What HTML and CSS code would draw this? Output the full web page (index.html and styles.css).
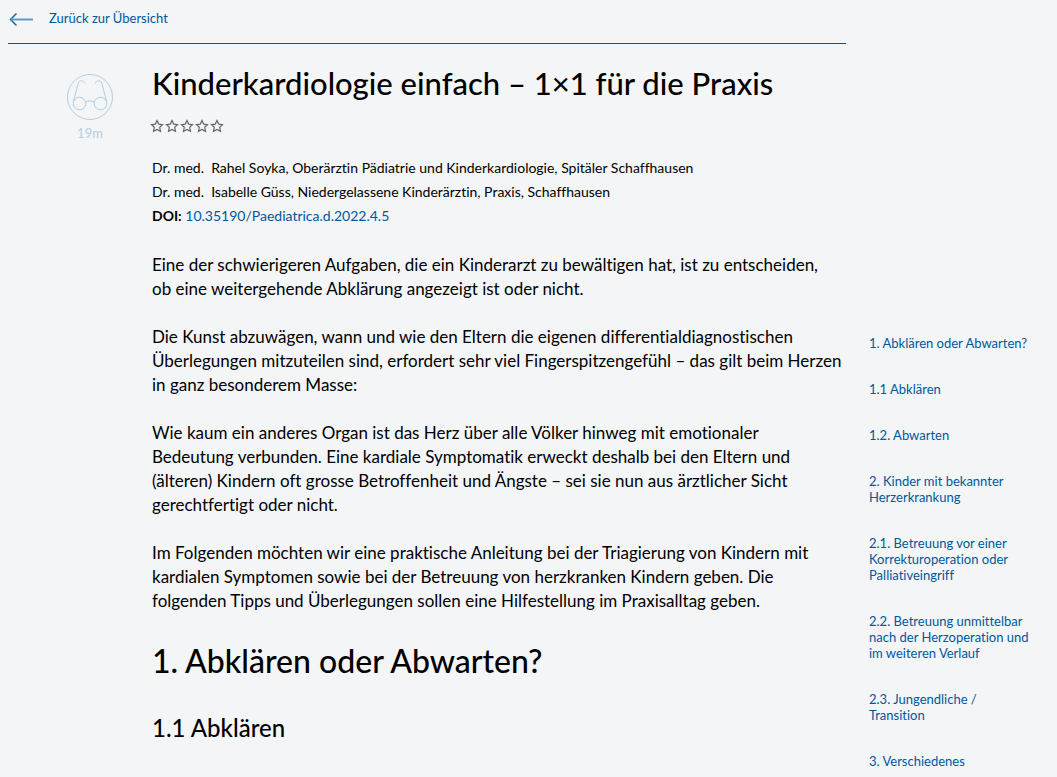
FILE: index.html
```html
<!DOCTYPE html>
<html lang="de">
<head>
    <meta charset="UTF-8">
    <meta name="viewport" content="width=device-width, initial-scale=1.0">
    <title>Kinderkardiologie einfach – 1×1 für die Praxis</title>
    <link rel="stylesheet" href="styles.css">
</head>
<body>

    <div class="page">
        <main class="main">
            <nav class="back-bar">
                <a class="back-link" href="#">
                    <svg class="back-arrow" viewBox="0 0 24 16" aria-hidden="true">
                        <path d="M7.500 3.500 1.500 9.500l6 6" />
                        <path class="shaft" d="M2 9.500h22" />
                    </svg>
                    <span>Zurück zur Übersicht</span>
                </a>
            </nav>

            <div class="article-wrap">
                <div class="reading-time">
                    <svg class="glasses" viewBox="0 0 48 48" aria-hidden="true">
                        <circle cx="24" cy="24" r="22.500" />
                        <circle cx="13.500" cy="30.500" r="6.300" />
                        <circle cx="34.500" cy="30.500" r="6.300" />
                        <path d="M19.800 29c2.500-1.500 5.900-1.500 8.400 0M7.500 28l4.800-18c.8-3 5.700-3 6.500.5M40.500 28l-4.800-18c-.8-3-5.700-3-6.500.5" />
                    </svg>
                    <span>19m</span>
                </div>

                <article class="article">
                    <h1>Kinderkardiologie einfach – 1×1 für die Praxis</h1>

                    <div class="rating" role="img" aria-label="0 von 5 Sternen">
                        <svg viewBox="0 0 14 14"><path d="M5 1.500l1.700 3.600 3.800.5-2.800 2.700.8 4L5 10.400l-3.500 1.900.8-4L-.5 5.600l3.800-.5z" /></svg>
                        <svg viewBox="0 0 14 14"><path d="M5 1.500l1.700 3.600 3.800.5-2.800 2.700.8 4L5 10.400l-3.500 1.900.8-4L-.5 5.600l3.800-.5z" /></svg>
                        <svg viewBox="0 0 14 14"><path d="M5 1.500l1.700 3.600 3.800.5-2.800 2.700.8 4L5 10.400l-3.500 1.900.8-4L-.5 5.600l3.800-.5z" /></svg>
                        <svg viewBox="0 0 14 14"><path d="M5 1.500l1.700 3.600 3.800.5-2.800 2.700.8 4L5 10.400l-3.500 1.900.8-4L-.5 5.600l3.800-.5z" /></svg>
                        <svg viewBox="0 0 14 14"><path d="M5 1.500l1.700 3.600 3.800.5-2.800 2.700.8 4L5 10.400l-3.500 1.900.8-4L-.5 5.600l3.800-.5z" /></svg>
                    </div>

                    <div class="meta">
                        <div>Dr. med.&nbsp; Rahel Soyka, Oberärztin Pädiatrie und Kinderkardiologie, Spitäler Schaffhausen</div>
                        <div>Dr. med.&nbsp; Isabelle Güss, Niedergelassene Kinderärztin, Praxis, Schaffhausen</div>
                        <div><strong>DOI:</strong> <a href="#">10.35190/Paediatrica.d.2022.4.5</a></div>
                    </div>

                    <p>Eine der schwierigeren Aufgaben, die ein Kinderarzt zu bewältigen hat, ist zu entscheiden,<br> ob eine weitergehende Abklärung angezeigt ist oder nicht.</p>
                    <p>Die Kunst abzuwägen, wann und wie den Eltern die eigenen differentialdiagnostischen Überlegungen mitzuteilen sind, erfordert sehr viel Fingerspitzengefühl – das gilt beim Herzen in ganz besonderem Masse:</p>
                    <p>Wie kaum ein anderes Organ ist das Herz über alle Völker hinweg mit emotionaler<br> Bedeutung verbunden. Eine kardiale Symptomatik erweckt deshalb bei den Eltern und<br> (älteren) Kindern oft grosse Betroffenheit und Ängste – sei sie nun aus ärztlicher Sicht<br> gerechtfertigt oder nicht.</p>
                    <p>Im Folgenden möchten wir eine praktische Anleitung bei der Triagierung von Kindern mit kardialen Symptomen sowie bei der Betreuung von herzkranken Kindern geben. Die folgenden Tipps und Überlegungen sollen eine Hilfestellung im Praxisalltag geben.</p>

                    <h2 id="k1">1. Abklären oder Abwarten?</h2>
                    <h3 id="k11">1.1 Abklären</h3>
                </article>
            </div>
        </main>

        <aside class="toc">
            <a href="#k1">1. Abklären oder Abwarten?</a>
            <a href="#k11">1.1 Abklären</a>
            <a href="#">1.2. Abwarten</a>
            <a href="#">2. Kinder mit bekannter Herzerkrankung</a>
            <a href="#">2.1. Betreuung vor einer Korrekturoperation oder Palliativeingriff</a>
            <a href="#">2.2. Betreuung unmittelbar nach der Herzoperation und im weiteren Verlauf</a>
            <a href="#">2.3. Jungendliche / Transition</a>
            <a href="#">3. Verschiedenes</a>
        </aside>
    </div>

</body>
</html>
```

FILE: styles.css
```css
body {
    margin: 0;
    padding: 0 8px;
    background: #f3f5f7;
    color: #000;
    font-family: Lato, "Open Sans", sans-serif;
    font-size: 17px;
    line-height: 24px;
    font-variant-ligatures: none;
}

a {
    color: #00589c;
    text-decoration: none;
}

a:hover {
    text-decoration: underline;
}

.page {
    display: flex;
    gap: 23px;
}

.main {
    flex: 1;
    min-width: 0;
}

.back-bar {
    padding: 6px 0 13px;
    border-bottom: 1px solid #00589c;
}

.back-link {
    display: flex;
    align-items: center;
    gap: 16px;
    padding-left: 1px;
    font-size: 13px;
}

.back-arrow {
    width: 24px;
    height: 16px;
    overflow: visible;
    fill: none;
    stroke: #1a6aa8;
    stroke-width: 1.5;
}

.back-arrow .shaft {
    stroke: #5e9bc9;
    stroke-width: 2;
}

.article-wrap {
    display: flex;
    padding-top: 19px;
}

.reading-time {
    display: flex;
    flex-direction: column;
    align-items: center;
    width: 144px;
    padding: 10px 0 0 20px;
    box-sizing: border-box;
    flex-shrink: 0;
    color: #b3cee3;
    font-size: 13px;
}

.glasses {
    width: 48px;
    height: 48px;
    fill: none;
    stroke: #b3cee3;
}

.article {
    flex: 1;
    min-width: 0;
}

h1,
h2,
h3 {
    margin: 0;
    font-weight: 500;
}

h1 {
    font-size: 31px;
    line-height: 40px;
}

.rating {
    display: flex;
    gap: 1px;
    margin: 16px 0 23px;
}

.rating svg {
    width: 14px;
    height: 14px;
    overflow: visible;
    fill: none;
    stroke: #666;
    stroke-width: 1.2;
}

.meta {
    margin-bottom: 25px;
    font-size: 14px;
}

p {
    margin: 0 0 24px;
}

h2 {
    margin: 28px 0 31px;
    font-size: 32px;
    line-height: 40px;
}

h3 {
    font-size: 24px;
    line-height: 32px;
    padding-bottom: 32px;
}

.toc {
    display: flex;
    flex-direction: column;
    gap: 30px;
    width: 164px;
    padding: 335px 16px 0 0;
    font-size: 13px;
    line-height: 16px;
}
```
